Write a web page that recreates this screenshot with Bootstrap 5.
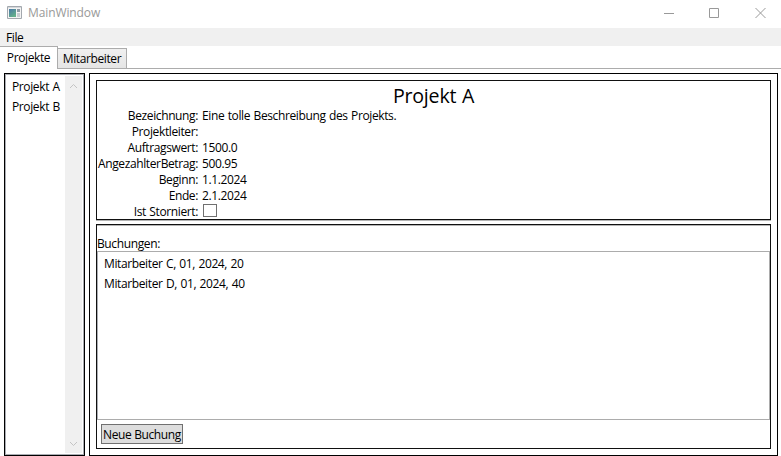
<!DOCTYPE html>
<html lang="de">
<head>
<meta charset="utf-8">
<title>MainWindow</title>
<link href="https://cdn.jsdelivr.net/npm/bootstrap@5.3.0/dist/css/bootstrap.min.css" rel="stylesheet">
<style>
body{width:781px;height:456px;overflow:hidden;background:#fff;color:#000;font:12px/16px "Open Sans","Noto Sans",sans-serif;letter-spacing:-.38px;word-spacing:.7px}
.titlebar{height:28px;padding:0 15px 3px 7px;color:#999}
.titlebar .caption-text{margin-left:6px;letter-spacing:-.1px}
.winbtns{gap:35px}
.menubar{height:18px;background:#f0f0f0;padding:2px 6px 0}
.tabstrip{height:23px;border-bottom:1px solid #acacac}
.tabstrip .nav-link{color:#000;border-radius:0;padding:0;border:1px solid #acacac;margin:0;text-align:center}
.tabstrip .tab-on{width:58px;height:23px;border-left:0;border-bottom:0;background:#fff;padding-top:3px;margin-bottom:-1px}
.tabstrip .tab-off{width:69px;height:21px;border-left:0;border-bottom-color:#acacac;background:linear-gradient(#f0f0f0,#e5e5e5);padding-top:2px;margin-bottom:-1px}
.workspace{height:387px;padding:4px 3px 0 4px;gap:4px}
.projects{width:81px;border:1px solid #000;box-shadow:inset 0 0 0 1px #abadb3;padding:2px}
.projects ul{padding:1px 0 0 5px}
.projects li{height:20px;padding-top:2px;white-space:nowrap}
.scroller{width:17px;background:#f0f0f0;padding:7px 0 6px;margin-right:0}
.detail{border:1px solid #000;padding:6px;min-width:0}
.box{border:1px solid #111}
.info{height:140px;box-shadow:0 1px #b4b4b4}
.info h1{font-size:19.6px;line-height:27px;font-weight:400;margin:0;height:27px;padding-top:1px;letter-spacing:-.2px}
.fields{display:grid;grid-template-columns:101px 1fr;column-gap:4px;grid-auto-rows:16px}
.fields dt{font-weight:400;text-align:right;white-space:nowrap}
.fields dd{margin:0}
.checkbox-sq{display:block;width:14px;height:13px;border:1px solid #707070;margin:0 0 0 1px}
.bookings{height:225px;margin-top:4px;box-shadow:inset 0 1px #b4b4b4}
.bookings .head{height:26px;padding-top:11px}
.entries{height:169px;border:1px solid #acacac;border-left-color:#abadb3;padding:2px 6px}
.entries li{height:20px;padding-top:2px}
.btn.new-booking{width:82px;height:20px;margin:4px 0 0 4px;padding:1px 0 0;border:1px solid #707070;border-radius:0;background:#ddd;color:#000;font:inherit;letter-spacing:inherit;line-height:16px;white-space:nowrap}
</style>
<script src="https://cdn.jsdelivr.net/npm/bootstrap@5.3.0/dist/js/bootstrap.bundle.min.js"></script>
</head>
<body>
<header class="titlebar d-flex align-items-center">
 <svg width="15" height="13" viewBox="0 0 15 13"><defs><linearGradient id="pane" x2=".6" y2="1"><stop stop-color="#4a78a8"/><stop offset="1" stop-color="#63b08a"/></linearGradient></defs><path d="M.5.5h14v12H.5z" fill="#f4f4f4" stroke="#a3a8ae"/><path d="M1 1h13v1H1z" fill="#d5d8db"/><path d="M2 3h7v8H2z" fill="url(#pane)"/><path d="M10 3h3v3h-3z" fill="#8f9ba6"/><path d="M10 7h3v4h-3z" fill="#c8cdd2"/></svg>
 <span class="caption-text">MainWindow</span>
 <div class="winbtns d-flex ms-auto">
  <svg width="10" height="10" stroke="#999"><path d="M0 5.5h10"/></svg>
  <svg width="11" height="10" fill="none" stroke="#999"><path d="M.5.5h9v9h-9z"/></svg>
  <svg width="11" height="10" stroke="#999"><path d="M.5 0l10 10M10.500 0l-10 10"/></svg>
 </div>
</header>
<nav class="menubar">File</nav>
<nav class="tabstrip nav align-items-end">
 <a class="nav-link tab-on">Projekte</a>
 <a class="nav-link tab-off">Mitarbeiter</a>
</nav>
<main class="workspace d-flex">
 <aside class="projects d-flex flex-shrink-0">
  <ul class="list-unstyled mb-0 flex-grow-1"><li>Projekt A</li><li>Projekt B</li></ul>
  <div class="scroller d-flex flex-column justify-content-between align-items-center">
   <svg width="9" height="6" fill="none" stroke="#c4c4c4"><path d="M1 5l3.500-3.500L8 5"/></svg>
   <svg width="9" height="6" fill="none" stroke="#c4c4c4"><path d="M1 1l3.500 3.500L8 1"/></svg>
  </div>
 </aside>
 <section class="detail flex-grow-1">
  <div class="box info">
   <h1 class="text-center">Projekt A</h1>
   <dl class="fields mb-0">
    <dt>Bezeichnung:</dt><dd>Eine tolle Beschreibung des Projekts.</dd>
    <dt>Projektleiter:</dt><dd></dd>
    <dt>Auftragswert:</dt><dd>1500.0</dd>
    <dt>AngezahlterBetrag:</dt><dd>500.95</dd>
    <dt>Beginn:</dt><dd>1.1.2024</dd>
    <dt>Ende:</dt><dd>2.1.2024</dd>
    <dt>Ist Storniert:</dt><dd><span class="checkbox-sq"></span></dd>
   </dl>
  </div>
  <div class="box bookings">
   <div class="head">Buchungen:</div>
   <ul class="entries list-unstyled mb-0"><li>Mitarbeiter C, 01, 2024, 20</li><li>Mitarbeiter D, 01, 2024, 40</li></ul>
   <button class="btn new-booking d-block">Neue Buchung</button>
  </div>
 </section>
</main>
</body>
</html>
